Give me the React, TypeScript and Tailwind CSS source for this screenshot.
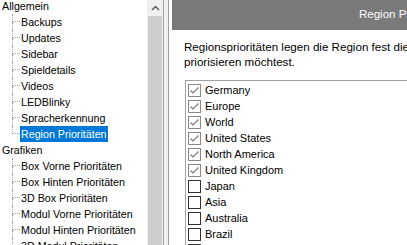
import React from "react";

const general = [
  "Backups",
  "Updates",
  "Sidebar",
  "Spieldetails",
  "Videos",
  "LEDBlinky",
  "Spracherkennung",
  "Region Prioritäten",
];

const graphics = [
  "Box Vorne Prioritäten",
  "Box Hinten Prioritäten",
  "3D Box Prioritäten",
  "Modul Vorne Prioritäten",
  "Modul Hinten Prioritäten",
  "3D Modul Prioritäten",
];

const regions = [
  { name: "Germany", on: true },
  { name: "Europe", on: true },
  { name: "World", on: true },
  { name: "United States", on: true },
  { name: "North America", on: true },
  { name: "United Kingdom", on: true },
  { name: "Japan", on: false },
  { name: "Asia", on: false },
  { name: "Australia", on: false },
  { name: "Brazil", on: false },
  { name: "Canada", on: false },
];

function TreeChild({ label, last, selected }: { label: string; last?: boolean; selected?: boolean }) {
  return (
    <div className="flex h-[16px] items-stretch">
      {/* dotted connector */}
      <div className="ml-[12px] w-[8px] flex flex-col">
        <div className="h-[8px] border-l border-b border-dotted border-[#a0a0a0]" />
        {!last && <div className="flex-1 border-l border-dotted border-[#a0a0a0]" />}
      </div>
      <div
        className={
          selected
            ? "flex items-center bg-[#0078d7] text-white px-[1px] whitespace-nowrap"
            : "flex items-center text-black px-[1px] whitespace-nowrap"
        }
      >
        {label}
      </div>
    </div>
  );
}

function Check({ on }: { on: boolean }) {
  return (
    <div
      className={
        on
          ? "w-[13px] h-[13px] shrink-0 border border-[#8a8a8a] bg-white flex items-center justify-center"
          : "w-[13px] h-[13px] shrink-0 border border-[#333333] bg-white"
      }
    >
      {on && (
        <svg width="11" height="11" viewBox="0 0 11 11">
          <path d="M1.5 5.5 L4 8 L9.5 2.5" fill="none" stroke="#7a7a7a" strokeWidth="1.2" />
        </svg>
      )}
    </div>
  );
}

export default function App() {
  return (
    <div
      className="flex w-[407px] h-[245px] overflow-hidden bg-white text-[10.7px]"
      style={{ fontFamily: '"Liberation Sans", Arial, sans-serif' }}
    >
      {/* Tree */}
      <div className="w-[147px] shrink-0 bg-white">
        <div className="mt-[-2px]">
          <div className="h-[16px] flex items-center pl-[2px] text-black">Allgemein</div>
          {general.map((g, i) => (
            <TreeChild key={g} label={g} last={i === general.length - 1} selected={g === "Region Prioritäten"} />
          ))}
          <div className="h-[16px] flex items-center pl-[2px] text-black">Grafiken</div>
          {graphics.map((g) => (
            <TreeChild key={g} label={g} />
          ))}
        </div>
      </div>

      {/* Scrollbar */}
      <div className="w-[16px] shrink-0 bg-[#f0f0f0] flex flex-col">
        <div className="h-[16px] flex items-center justify-center">
          <svg width="9" height="6" viewBox="0 0 9 6">
            <path d="M1 5 L4.5 1.5 L8 5" fill="none" stroke="#606060" strokeWidth="1.5" />
          </svg>
        </div>
        <div className="flex-1 mx-[1px] bg-[#cdcdcd]" />
      </div>

      {/* Splitter */}
      <div className="w-[6px] shrink-0 border-l border-r border-[#a0a0a0] bg-[#f0f0f0]" />

      {/* Right panel */}
      <div className="flex-1 pl-[3px] bg-white min-w-0">
        <div className="h-[30px] bg-[#7a7a7a] text-white text-[11.5px] flex items-center pl-[187px] whitespace-nowrap overflow-hidden">
          Region Prioritäten
        </div>
        <div className="pl-[12px] pt-[9px] text-[11.6px] leading-[15px] text-black whitespace-nowrap overflow-hidden">
          <div>Regionsprioritäten legen die Region fest die du gerne</div>
          <div>priorisieren möchtest.</div>
        </div>
        <div className="ml-[13px] mt-[11px] border-l border-t border-[#a0a0a0] pt-[1px] pl-[2px] text-[11px] text-black">
          {regions.map((r) => (
            <div key={r.name} className="h-[16px] flex items-center gap-[4px] whitespace-nowrap">
              <Check on={r.on} />
              <span>{r.name}</span>
            </div>
          ))}
        </div>
      </div>
    </div>
  );
}
